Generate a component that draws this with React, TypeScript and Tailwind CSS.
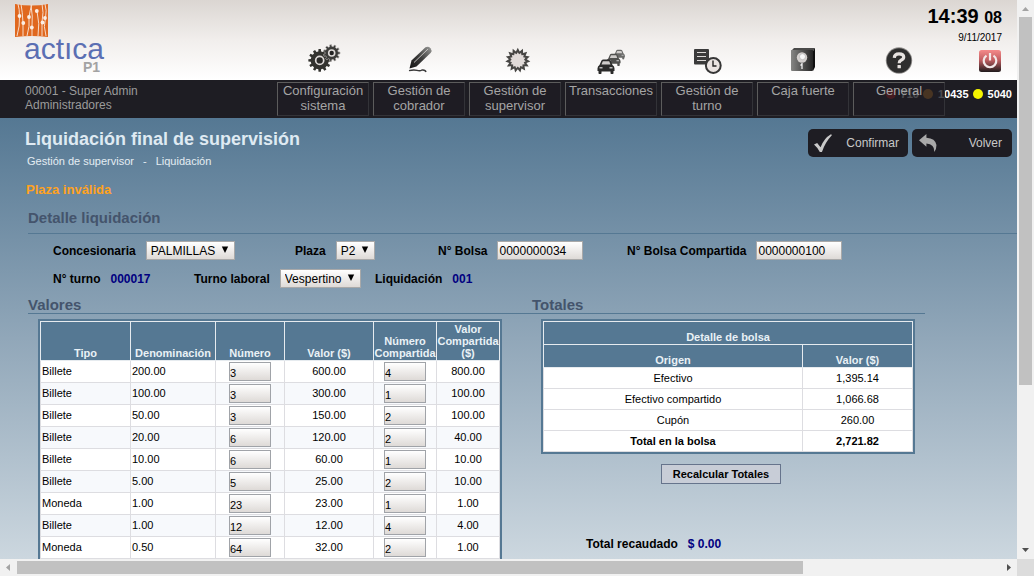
import React from "react";

function gearPath(cx: number, cy: number, outer: number, inner: number, teeth: number): string {
  const points: string[] = [];
  const step = (Math.PI * 2) / teeth;
  for (let i = 0; i < teeth; i++) {
    const a = i * step;
    const corners: [number, number][] = [
      [inner, a - step * 0.3],
      [outer, a - step * 0.2],
      [outer, a + step * 0.2],
      [inner, a + step * 0.3],
    ];
    corners.forEach(([r, t]) => {
      points.push(`${(cx + r * Math.cos(t)).toFixed(2)} ${(cy + r * Math.sin(t)).toFixed(2)}`);
    });
  }
  return `M${points.join("L")}Z`;
}

function starPath(cx: number, cy: number, outer: number, inner: number, spikes: number): string {
  const points: string[] = [];
  for (let i = 0; i < spikes * 2; i++) {
    const r = i % 2 === 0 ? outer : inner;
    const t = (i * Math.PI) / spikes - Math.PI / 2;
    points.push(`${(cx + r * Math.cos(t)).toFixed(2)} ${(cy + r * Math.sin(t)).toFixed(2)}`);
  }
  return `M${points.join("L")}Z`;
}

function GearsIcon() {
  return (
    <svg width="36" height="32" viewBox="0 0 36 32" aria-hidden="true">
      <path d={gearPath(14.7, 18.4, 11.4, 9, 12)} fill="#33332f" />
      <circle cx="14.7" cy="18.4" r="4" fill="#2a2a28" stroke="#dedad8" strokeWidth="1.700" />
      <path d={gearPath(26.7, 11, 8.4, 6.6, 11)} fill="#3c3c3a" stroke="#bcb9b7" strokeWidth="0.600" />
      <circle cx="26.7" cy="11" r="3" fill="#222" stroke="#dedad8" strokeWidth="1.600" />
    </svg>
  );
}

function PencilIcon() {
  return (
    <svg width="36" height="32" viewBox="0 0 36 32" aria-hidden="true">
      <defs>
        <linearGradient id="pencil" x1="0" y1="1" x2="1" y2="0">
          <stop offset="0" stopColor="#141414" />
          <stop offset="0.500" stopColor="#3c3c3b" />
          <stop offset="1" stopColor="#9c9c9a" />
        </linearGradient>
      </defs>
      <path d="M8.500 26.500L10.500 18.500L24.500 5.200Q27.500 4 29.500 6.200Q31.500 8.500 29.800 10.800L15.500 24.500Z" fill="url(#pencil)" />
      <path d="M13 20.500L27 7" stroke="#cfccc9" strokeWidth="0.900" />
      <path d="M8 28.600Q13 27.400 16 28.400T21 28Q24.500 27.600 25 30" fill="none" stroke="#3a3a3a" strokeWidth="1.400" />
    </svg>
  );
}

function BurstIcon() {
  return (
    <svg width="36" height="32" viewBox="0 0 36 32" aria-hidden="true">
      <path d={starPath(20.8, 18.3, 12.6, 9, 15)} fill="#474644" />
      <path d={starPath(20.8, 18.3, 8, 6.2, 15)} fill="#e0dad8" />
    </svg>
  );
}

function Car({ x, y, s, color }: { x: number; y: number; s: number; color: string }) {
  return (
    <g transform={`translate(${x} ${y}) scale(${s})`}>
      <path
        d="M3 6L5 1.500Q5.500 .5 7 .4L12 .4Q13.500 .5 14 1.500L16 6Q18 7 18 9.500V12H17V14.500Q15.500 16 14 14.500V12.500H5V14.500Q3.500 16 2 14.500V12H1V9.500Q1 7 3 6Z"
        fill={color}
      />
      <path d="M5 5.600L6.300 2.200H12.700L14 5.600Z" fill="#cfccca" />
      <rect x="3" y="8" width="3" height="1.500" fill="#bbb" />
      <rect x="13" y="8" width="3" height="1.500" fill="#bbb" />
    </g>
  );
}

function CarsIcon() {
  return (
    <svg width="36" height="32" viewBox="0 0 36 32" aria-hidden="true">
      <Car x={20} y={7.5} s={0.66} color="#6a6a68" />
      <Car x={12.8} y={11.5} s={0.82} color="#50504e" />
      <Car x={3.5} y={17} s={1} color="#2b2b2a" />
    </svg>
  );
}

function ShiftIcon() {
  return (
    <svg width="36" height="32" viewBox="0 0 36 32" aria-hidden="true">
      <rect x="5" y="7" width="15" height="15.500" rx="1" fill="#3a3a3a" />
      <path d="M8 10.500H17M8 14.500H17M8 18.500H17" stroke="#dcd9d7" strokeWidth="1.200" />
      <circle cx="24.300" cy="23.500" r="7.400" fill="#e9e3e1" stroke="#363636" strokeWidth="2" />
      <path d="M24 18.500V24H27.500" fill="none" stroke="#222" strokeWidth="1.400" />
    </svg>
  );
}

function SafeIcon() {
  return (
    <svg width="36" height="32" viewBox="0 0 36 32" aria-hidden="true">
      <defs>
        <linearGradient id="safe" x1="0" x2="1">
          <stop offset="0" stopColor="#868684" />
          <stop offset="1" stopColor="#252525" />
        </linearGradient>
      </defs>
      <path d="M6 9L9 6H30L28 9Z" fill="#4a4a49" />
      <path d="M28 9L30 6V25L28 29Z" fill="#0f0f0f" />
      <rect x="6" y="8" width="22" height="21" rx="1" fill="url(#safe)" />
      <circle cx="17" cy="15.500" r="5.200" fill="#d4d0ce" />
      <circle cx="17.500" cy="14.700" r="3" fill="#f8f8f8" stroke="#aaa" strokeWidth="0.600" />
      <path d="M17 21V27M15.500 23.500L17 22" fill="none" stroke="#eee" strokeWidth="1.300" />
    </svg>
  );
}

function HelpIcon() {
  return (
    <svg width="36" height="32" viewBox="0 0 36 32" aria-hidden="true">
      <circle cx="18" cy="18.500" r="13.200" fill="#8f8d8b" />
      <circle cx="18" cy="18.500" r="12.300" fill="#2e2e2e" />
      <path d="M13.300 15.800Q13.500 11.800 18 11.800Q22.700 11.800 22.700 15Q22.700 17 20 18.300Q18.200 19.200 18.200 21.300" fill="none" stroke="#e6e2e0" strokeWidth="3.200" />
      <rect x="16.500" y="23" width="3.400" height="3.200" rx="0.500" fill="#e6e2e0" />
    </svg>
  );
}

function PowerIcon() {
  return (
    <svg width="24" height="24" viewBox="0 0 24 24" aria-hidden="true">
      <defs>
        <linearGradient id="power" x1="0" y1="0" x2="0" y2="1">
          <stop offset="0" stopColor="#f58a8a" />
          <stop offset="0.450" stopColor="#c25f62" />
          <stop offset="1" stopColor="#201b1d" />
        </linearGradient>
      </defs>
      <rect x="1" y="1" width="22" height="22" rx="2.500" fill="url(#power)" />
      <path d="M8.500 6.700A6.300 6.300 0 1 0 15.500 6.700" fill="none" stroke="#f3e9e9" strokeWidth="2.200" />
      <path d="M12 4V11.500" stroke="#f3e9e9" strokeWidth="2.200" />
    </svg>
  );
}

function LogoMark() {
  return (
    <svg width="34" height="34" viewBox="0 0 34 34" aria-hidden="true">
      <path d="M0 0Q17 3 33 0V33Q17 31 0 33Z" fill="#e0681f" />
      <g fill="none" stroke="#f6dccb" strokeWidth="1">
        <path d="M2 32Q5 22 4.500 12Q4.500 5 3 0M8 32V19Q7.500 8 6 0M12 32Q15 22 14 13Q15 6 17 0M17 32V23Q18 12 16 1M23 32Q25 20 22 7M27 32V18Q29 8 27 0M31 32Q28 22 30.500 14Q32 6 30 0" />
      </g>
      <g fill="#fbeee5">
        <circle cx="4.500" cy="12" r="1.900" />
        <circle cx="8.300" cy="19" r="1.900" />
        <circle cx="14" cy="13" r="1.900" />
        <circle cx="16.800" cy="23.500" r="1.900" />
        <circle cx="21.800" cy="7" r="1.900" />
        <circle cx="27.500" cy="18.500" r="1.900" />
        <circle cx="30" cy="14" r="1.900" />
      </g>
    </svg>
  );
}

const menu = [
  { label: "Configuración sistema", icon: GearsIcon },
  { label: "Gestión de cobrador", icon: PencilIcon },
  { label: "Gestión de supervisor", icon: BurstIcon },
  { label: "Transacciones", icon: CarsIcon },
  { label: "Gestión de turno", icon: ShiftIcon },
  { label: "Caja fuerte", icon: SafeIcon },
  { label: "General", icon: HelpIcon },
];

const lights = [
  { value: "710", dot: "bg-[#e01818]" },
  { value: "10435", dot: "bg-[#f09020]" },
  { value: "5040", dot: "bg-[#f4f400]" },
];

const rows = [
  ["Billete", "200.00", "3", "600.00", "4", "800.00"],
  ["Billete", "100.00", "3", "300.00", "1", "100.00"],
  ["Billete", "50.00", "3", "150.00", "2", "100.00"],
  ["Billete", "20.00", "6", "120.00", "2", "40.00"],
  ["Billete", "10.00", "6", "60.00", "1", "10.00"],
  ["Billete", "5.00", "5", "25.00", "2", "10.00"],
  ["Moneda", "1.00", "23", "23.00", "1", "1.00"],
  ["Billete", "1.00", "12", "12.00", "4", "4.00"],
  ["Moneda", "0.50", "64", "32.00", "2", "1.00"],
];

const totals = [
  ["Efectivo", "1,395.14"],
  ["Efectivo compartido", "1,066.68"],
  ["Cupón", "260.00"],
];

function PickList({ id, label, value, width }: { id: string; label: string; value: string; width: string }) {
  return (
    <div className="flex items-center gap-[10px]">
      <label htmlFor={id}>{label}</label>
      <div className={`relative ${width}`}>
        <select
          id={id}
          defaultValue={value}
          className="block h-[19px] w-full appearance-none border border-[#a9a9a9] bg-linear-to-b from-white to-[#dedad7] pl-1 text-[12px] leading-4 font-normal"
        >
          <option>{value}</option>
        </select>
        <svg className="pointer-events-none absolute top-[5px] right-[6px]" width="8" height="8" viewBox="0 0 8 8" aria-hidden="true">
          <path d="M0.800 0.500H7.200L4 7Z" fill="#000" />
        </svg>
      </div>
    </div>
  );
}

function TextField({ id, label, value }: { id: string; label: string; value: string }) {
  return (
    <div className="flex items-center gap-[10px]">
      <label htmlFor={id}>{label}</label>
      <input
        id={id}
        defaultValue={value}
        className="h-[19px] w-[86px] border border-[#a9a9a9] bg-linear-to-b from-white to-[#dedad7] px-px text-[12px] font-normal"
      />
    </div>
  );
}

function CountInput({ label, value }: { label: string; value: string }) {
  return (
    <input
      aria-label={label}
      defaultValue={value}
      className="mx-auto block h-[19px] w-[42px] border border-[#a0a3a8] bg-linear-to-b from-white to-[#dedad7] pt-[2px] text-[11px]"
    />
  );
}

function ActionIcon({ d, className }: { d: string; className: string }) {
  return (
    <svg className={className} width="18" height="18" viewBox="0 0 17 17" aria-hidden="true">
      <path d={d} />
    </svg>
  );
}

export default function App() {
  const head = "border border-[#e6ebef] p-0 pb-px font-bold";
  const cell = "border border-[#dddde1] py-0";
  const textCell = "border border-[#dddde1] px-px pt-0 pb-[2px]";
  return (
    <div className="grid h-screen grid-cols-[minmax(0,1fr)_17px] grid-rows-[minmax(0,1fr)_17px] bg-[#f1f1f1] font-['Liberation_Sans',Arial,sans-serif] text-black">
      <div className="flex min-h-0 flex-col overflow-hidden">
        <header className="shrink-0">
          <div className="flex h-20 bg-linear-to-b from-[#dbd6d2] via-[#f1eeec] to-white">
            <div className="flex w-[277px] shrink-0 flex-col pt-1 pl-[15px]">
              <LogoMark />
              <div className="-mt-px ml-[10px] flex w-[79px] flex-col items-end">
                <span className="text-[30px] leading-6 text-[#5b6fb3]">actıca</span>
                <span className="mr-1 text-[14px] leading-3 font-bold text-[#a3a3a3]">P1</span>
              </div>
            </div>
            <nav className="flex shrink-0 gap-1 pt-[42px]" aria-label="Módulos">
              {menu.map(({ label, icon: Icon }) => (
                <a key={label} href="#" aria-label={label} className="flex h-8 w-[92px] justify-center">
                  <Icon />
                </a>
              ))}
            </nav>
            <div className="flex min-w-0 flex-1 flex-col items-end pt-1 pr-[15px] whitespace-nowrap">
              <div className="text-[20px] leading-6 font-bold">
                14:39 <span className="text-[16px]">08</span>
              </div>
              <div className="text-[10px] leading-4">9/11/2017</div>
              <button type="button" aria-label="Salir" className="mt-[3px]">
                <PowerIcon />
              </button>
            </div>
          </div>
          <div className="relative flex h-[38px] bg-[#1e1d23]">
            <div className="w-[277px] shrink-0 pt-1 pl-[25px] text-[12px] leading-[14px] text-[#9b9b9b]">
              <div>00001 - Super Admin</div>
              <div>Administradores</div>
            </div>
            <div className="absolute top-[6px] right-[5px] flex gap-1 text-[11px] leading-4 font-bold text-white">
              {lights.map((l) => (
                <span key={l.value} className="flex items-center gap-[5px]">
                  <span className={`size-[10px] rounded-full ${l.dot}`} />
                  {l.value}
                </span>
              ))}
            </div>
            <div className="relative flex shrink-0 gap-1 pt-[2px]">
              {menu.map(({ label }) => (
                <button
                  key={label}
                  type="button"
                  className="flex h-[34px] w-[92px] justify-center border border-t-[#5c5c5c] border-r-[#333338] border-b-[#333338] border-l-[#5c5c5c] bg-[#1e1d23]/80 text-[13px] leading-[15px] text-[#a5a5a5]"
                >
                  {label}
                </button>
              ))}
            </div>
          </div>
        </header>

        <main className="flex min-h-0 flex-1 flex-col bg-linear-to-b from-[#557893] via-[#91a7b9] to-[#ccd7df] text-[12px] font-bold">
          <div className="flex items-start justify-between pt-[11px] pr-[5px] pl-[25px]">
            <div>
              <h1 className="text-[18px] leading-5 text-[#dfeaf2]">Liquidación final de supervisión</h1>
              <div className="mt-[5px] flex gap-[9px] pl-[2px] text-[11px] leading-[14px] font-normal text-[#e4edf3]">
                <span>Gestión de supervisor</span>
                <span>-</span>
                <span>Liquidación</span>
              </div>
            </div>
            <div className="flex gap-1 text-[12px] font-normal text-[#c9c9c9]">
              <button type="button" className="flex h-7 w-[100px] items-center justify-between rounded-[5px] bg-[#1e1d23] pr-[9px] pl-[6px]">
                <ActionIcon className="fill-[#c9c9c9]" d="M0 10L3 8.500L6.200 12.500Q9.500 4 16 0.300L17 1Q10.500 8 7.500 17H5.500Q3 12.500 0 10Z" />
                Confirmar
              </button>
              <button type="button" className="flex h-7 w-[100px] items-center justify-between rounded-[5px] bg-[#1e1d23] pr-[10px] pl-[7px]">
                <ActionIcon className="fill-[#a9a9a9]" d="M0 6L7 0V3.500Q15.500 4 16.500 10.500Q16.500 14.500 14.500 17Q14.800 9.500 7 9V12Z" />
                Volver
              </button>
            </div>
          </div>
          <p className="mt-[14px] pl-[26px] text-[13px] leading-4 text-[#ffa21f]">Plaza inválida</p>
          <h2 className="mt-[11px] ml-7 border-b border-[#557893] pb-[6px] text-[15px] leading-[18px] text-[#44546c]">
            Detalle liquidación
          </h2>

          <div className="mt-[7px] grid grid-cols-[242px_143px_189px_auto] pl-[53px]">
            <PickList id="concesionaria" label="Concesionaria" value="PALMILLAS" width="w-[89px]" />
            <PickList id="plaza" label="Plaza" value="P2" width="w-[39px]" />
            <TextField id="bolsa" label="N° Bolsa" value="0000000034" />
            <TextField id="compartida" label="N° Bolsa Compartida" value="0000000100" />
          </div>
          <div className="mt-[9px] grid grid-cols-[141px_181px_auto] items-center pl-[53px]">
            <div className="flex gap-[10px]">
              <span>N° turno</span>
              <span className="text-[#000080]">000017</span>
            </div>
            <PickList id="laboral" label="Turno laboral" value="Vespertino" width="w-[81px]" />
            <div className="flex gap-[10px]">
              <span>Liquidación</span>
              <span className="text-[#000080]">001</span>
            </div>
          </div>

          <div className="mt-[9px] ml-7 grid w-[897px] grid-cols-[504px_auto] border-b border-[#557893] text-[15px] leading-4 text-[#44546c]">
            <h2>Valores</h2>
            <h2>Totales</h2>
          </div>

          <div className="mt-[5px] ml-[38px] flex items-start gap-[39px]">
            <div className="border-2 border-[#557893]">
              <table className="w-[460px] table-fixed border-collapse bg-white text-[11px] leading-3 font-normal">
                <colgroup>
                  <col className="w-[90px]" />
                  <col className="w-[85px]" />
                  <col className="w-[69px]" />
                  <col className="w-[89px]" />
                  <col className="w-[63px]" />
                  <col className="w-[63px]" />
                </colgroup>
                <thead className="bg-[#557893] text-[#e9f1f6]">
                  <tr className="h-[39px] align-bottom">
                    <th className={head}>Tipo</th>
                    <th className={head}>Denominación</th>
                    <th className={head}>Número</th>
                    <th className={head}>Valor ($)</th>
                    <th className={head}>Número Compartida</th>
                    <th className={head}>Valor Compartida ($)</th>
                  </tr>
                </thead>
                <tbody>
                  {rows.map(([tipo, den, num, val, numC, valC], i) => (
                    <tr key={i} className="h-[22px] even:bg-[#f7f9fc]">
                      <td className={textCell}>{tipo}</td>
                      <td className={textCell}>{den}</td>
                      <td className={`${cell} px-0`}>
                        <CountInput label={`Número ${tipo} ${den}`} value={num} />
                      </td>
                      <td className={`${textCell} text-center`}>{val}</td>
                      <td className={`${cell} px-0`}>
                        <CountInput label={`Número compartida ${tipo} ${den}`} value={numC} />
                      </td>
                      <td className={`${textCell} text-center`}>{valC}</td>
                    </tr>
                  ))}
                </tbody>
              </table>
            </div>

            <div>
              <div className="border-2 border-[#557893]">
                <table className="w-[370px] table-fixed border-collapse bg-white text-center text-[11px] leading-3 font-normal">
                  <colgroup>
                    <col className="w-[259px]" />
                    <col className="w-[110px]" />
                  </colgroup>
                  <thead className="bg-[#557893] text-[#e9f1f6]">
                    <tr className="h-[23px] align-bottom">
                      <th colSpan={2} className={head}>Detalle de bolsa</th>
                    </tr>
                    <tr className="h-[23px] align-bottom">
                      <th className={head}>Origen</th>
                      <th className={head}>Valor ($)</th>
                    </tr>
                  </thead>
                  <tbody>
                    {totals.map(([name, amount]) => (
                      <tr key={name} className="h-[21px]">
                        <td className={cell}>{name}</td>
                        <td className={cell}>{amount}</td>
                      </tr>
                    ))}
                    <tr className="h-[21px] font-bold">
                      <td className={cell}>Total en la bolsa</td>
                      <td className={cell}>2,721.82</td>
                    </tr>
                  </tbody>
                </table>
              </div>
              <button
                type="button"
                className="mt-[10px] ml-[120px] block h-5 w-[120px] border border-[#66748c] bg-[#c8cdd7] text-[11px] leading-4 font-bold"
              >
                Recalcular Totales
              </button>
              <div className="mt-[52px] flex gap-[10px] pl-[45px] leading-4">
                <span>Total recaudado</span>
                <span className="text-[#000080]">$ 0.00</span>
              </div>
            </div>
          </div>
        </main>
      </div>

      <div className="flex min-h-0 flex-col items-center">
        <svg className="shrink-0" width="17" height="17" viewBox="0 0 17 17" aria-hidden="true">
          <path d="M5 11H12L8.500 7Z" fill="#a3a3a3" />
        </svg>
        <div className="min-h-0 w-full flex-1 px-[2px]">
          <div className="h-[70%] bg-[#c1c1c1]" />
        </div>
        <svg className="shrink-0" width="17" height="17" viewBox="0 0 17 17" aria-hidden="true">
          <path d="M5 6H12L8.500 10Z" fill="#505050" />
        </svg>
      </div>
      <div className="flex min-w-0">
        <svg className="shrink-0" width="17" height="17" viewBox="0 0 17 17" aria-hidden="true">
          <path d="M10 5V12L6 8.500Z" fill="#a3a3a3" />
        </svg>
        <div className="min-w-0 flex-1 py-[2px]">
          <div className="h-full w-[80%] bg-[#c1c1c1]" />
        </div>
        <svg className="shrink-0" width="17" height="17" viewBox="0 0 17 17" aria-hidden="true">
          <path d="M7 5V12L11 8.500Z" fill="#505050" />
        </svg>
      </div>
      <div className="bg-[#dcdcdc]" />
    </div>
  );
}
